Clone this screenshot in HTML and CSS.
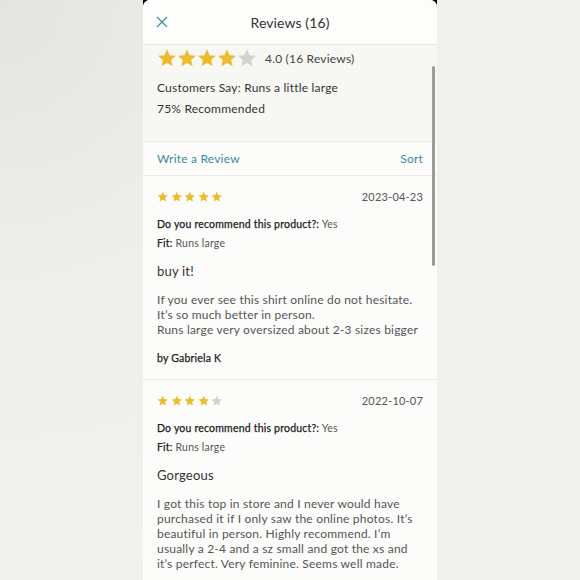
FILE: index.html
```html
<!DOCTYPE html>
<html>
<head>
<meta charset="utf-8">
<link rel="stylesheet" href="styles.css">
</head>
<body>
<div class="frame">
  <div class="sheet">
    <header class="topbar">
      <svg class="close" width="12" height="12" viewBox="0 0 12 12"><path d="M1 1L11 11M11 1L1 11" stroke="#4a8fa3" stroke-width="1.3" fill="none"/></svg>
      <h1 class="title">Reviews (16)</h1>
    </header>
    <section class="summary">
      <div class="rating-row">
        <div class="stars big">
          <svg viewBox="0 0 24 24"><path class="on" d="M12 1.5l3.1 7.1 7.7.7-5.8 5.1 1.7 7.6L12 18l-6.7 4 1.7-7.6-5.8-5.1 7.7-.7z"/></svg>
          <svg viewBox="0 0 24 24"><path class="on" d="M12 1.5l3.1 7.1 7.7.7-5.8 5.1 1.7 7.6L12 18l-6.7 4 1.7-7.6-5.8-5.1 7.7-.7z"/></svg>
          <svg viewBox="0 0 24 24"><path class="on" d="M12 1.5l3.1 7.1 7.7.7-5.8 5.1 1.7 7.6L12 18l-6.7 4 1.7-7.6-5.8-5.1 7.7-.7z"/></svg>
          <svg viewBox="0 0 24 24"><path class="on" d="M12 1.5l3.1 7.1 7.7.7-5.8 5.1 1.7 7.6L12 18l-6.7 4 1.7-7.6-5.8-5.1 7.7-.7z"/></svg>
          <svg viewBox="0 0 24 24"><path class="off" d="M12 1.5l3.1 7.1 7.7.7-5.8 5.1 1.7 7.6L12 18l-6.7 4 1.7-7.6-5.8-5.1 7.7-.7z"/></svg>
        </div>
        <span class="avg">4.0 (16 Reviews)</span>
      </div>
      <p class="say">Customers Say: Runs a little large</p>
      <p class="say">75% Recommended</p>
    </section>
    <nav class="actions">
      <span class="link">Write a Review</span>
      <span class="link">Sort</span>
    </nav>
    <article class="review">
      <div class="review-head">
        <div class="stars small">
          <svg viewBox="0 0 24 24"><path class="on" d="M12 1.5l3.1 7.1 7.7.7-5.8 5.1 1.7 7.6L12 18l-6.7 4 1.7-7.6-5.8-5.1 7.7-.7z"/></svg>
          <svg viewBox="0 0 24 24"><path class="on" d="M12 1.5l3.1 7.1 7.7.7-5.8 5.1 1.7 7.6L12 18l-6.7 4 1.7-7.6-5.8-5.1 7.7-.7z"/></svg>
          <svg viewBox="0 0 24 24"><path class="on" d="M12 1.5l3.1 7.1 7.7.7-5.8 5.1 1.7 7.6L12 18l-6.7 4 1.7-7.6-5.8-5.1 7.7-.7z"/></svg>
          <svg viewBox="0 0 24 24"><path class="on" d="M12 1.5l3.1 7.1 7.7.7-5.8 5.1 1.7 7.6L12 18l-6.7 4 1.7-7.6-5.8-5.1 7.7-.7z"/></svg>
          <svg viewBox="0 0 24 24"><path class="on" d="M12 1.5l3.1 7.1 7.7.7-5.8 5.1 1.7 7.6L12 18l-6.7 4 1.7-7.6-5.8-5.1 7.7-.7z"/></svg>
        </div>
        <span class="date">2023-04-23</span>
      </div>
      <p class="meta first"><b>Do you recommend this product?:</b> Yes</p>
      <p class="meta"><b>Fit:</b> Runs large</p>
      <h2 class="rtitle">buy it!</h2>
      <p class="body">If you ever see this shirt online do not hesitate.<br>It’s so much better in person.<br>Runs large very oversized about 2-3 sizes bigger</p>
      <p class="author">by Gabriela K</p>
    </article>
    <article class="review">
      <div class="review-head">
        <div class="stars small">
          <svg viewBox="0 0 24 24"><path class="on" d="M12 1.5l3.1 7.1 7.7.7-5.8 5.1 1.7 7.6L12 18l-6.7 4 1.7-7.6-5.8-5.1 7.7-.7z"/></svg>
          <svg viewBox="0 0 24 24"><path class="on" d="M12 1.5l3.1 7.1 7.7.7-5.8 5.1 1.7 7.6L12 18l-6.7 4 1.7-7.6-5.8-5.1 7.7-.7z"/></svg>
          <svg viewBox="0 0 24 24"><path class="on" d="M12 1.5l3.1 7.1 7.7.7-5.8 5.1 1.7 7.6L12 18l-6.7 4 1.7-7.6-5.8-5.1 7.7-.7z"/></svg>
          <svg viewBox="0 0 24 24"><path class="on" d="M12 1.5l3.1 7.1 7.7.7-5.8 5.1 1.7 7.6L12 18l-6.7 4 1.7-7.6-5.8-5.1 7.7-.7z"/></svg>
          <svg viewBox="0 0 24 24"><path class="off" d="M12 1.5l3.1 7.1 7.7.7-5.8 5.1 1.7 7.6L12 18l-6.7 4 1.7-7.6-5.8-5.1 7.7-.7z"/></svg>
        </div>
        <span class="date">2022-10-07</span>
      </div>
      <p class="meta first"><b>Do you recommend this product?:</b> Yes</p>
      <p class="meta"><b>Fit:</b> Runs large</p>
      <h2 class="rtitle">Gorgeous</h2>
      <p class="body">I got this top in store and I never would have purchased it if I only saw the online photos. It’s beautiful in person. Highly recommend. I’m usually a 2-4 and a sz small and got the xs and it’s perfect. Very feminine. Seems well made.</p>
    </article>
    <div class="scrollbar"></div>
  </div>
</div>
</body>
</html>
```

FILE: styles.css
```css
* { box-sizing: border-box; margin: 0; padding: 0; }
html, body { height: 580px; overflow: hidden; }
body {
  background: radial-gradient(circle at 0 0, #e4e4e2 0%, #eeeeeb 35%, #f1f1ed 70%);
  font-family: Lato, "Open Sans", sans-serif;
  color: #444;
}
.frame {
  width: 294px;
  margin: 0 auto;
  background: #000;
  height: 580px;
}
.sheet {
  position: relative;
  height: 100%;
  background: #fcfcfa;
  border-radius: 7px 7px 0 0;
  overflow: hidden;
}
.topbar {
  height: 45px;
  display: flex;
  align-items: center;
  justify-content: center;
  position: relative;
  background: #fdfdfb;
  border-bottom: 1px solid #e6e6e2;
}
.close { position: absolute; left: 13px; top: 16px; }
.title { font-size: 14px; font-weight: 400; color: #333; letter-spacing: 0.1px; }
.summary {
  background: #f7f7f4;
  padding: 3px 14px 22px;
}
.rating-row { display: flex; align-items: center; height: 20px; }
.stars { display: flex; }
.stars svg { display: block; }
.stars.big svg { width: 20px; height: 20px; }
.stars.small { gap: 2px; }
.stars.small svg { width: 11.5px; height: 11.5px; }
.on { fill: #edbb2f; }
.off { fill: #d2d2d0; }
.avg { margin-left: 8px; font-size: 12px; color: #444; letter-spacing: 0.2px; }
.say { font-size: 12px; line-height: 21px; color: #333; letter-spacing: 0.2px; }
.summary .say:first-of-type { margin-top: 9px; }
.actions {
  height: 35px;
  display: flex;
  align-items: center;
  justify-content: space-between;
  padding: 0 14px 1px;
  border-top: 1px solid #ebebe7;
  border-bottom: 1px solid #ebebe7;
  background: #fcfcfa;
}
.link { color: #3d8aa0; font-size: 12px; letter-spacing: 0.2px; }
.review {
  padding: 14px 14px 13px;
  border-bottom: 1px solid #ebebe7;
}
.review-head { display: flex; justify-content: space-between; align-items: center; height: 13px; }
.date { font-size: 11px; color: #555; letter-spacing: 0.2px; }
.meta { font-size: 10.5px; line-height: 19px; color: #555; letter-spacing: 0.2px; }
.meta b { font-weight: 400; color: #222; -webkit-text-stroke: 0.25px #222; }
.meta.first { margin-top: 12px; }
.rtitle { font-size: 13px; font-weight: 400; line-height: 20px; color: #333; margin-top: 8px; letter-spacing: 0.2px; }
.body { font-size: 12px; line-height: 15px; color: #555; margin-top: 11px; letter-spacing: 0.2px; }
.author { font-size: 10.5px; font-weight: 400; color: #222; -webkit-text-stroke: 0.25px #222; line-height: 16px; margin-top: 13px; letter-spacing: 0.2px; }
.scrollbar {
  position: absolute;
  left: 289px;
  top: 66px;
  width: 3px;
  height: 200px;
  background: #9b9b9b;
  border-radius: 2px;
}
```
